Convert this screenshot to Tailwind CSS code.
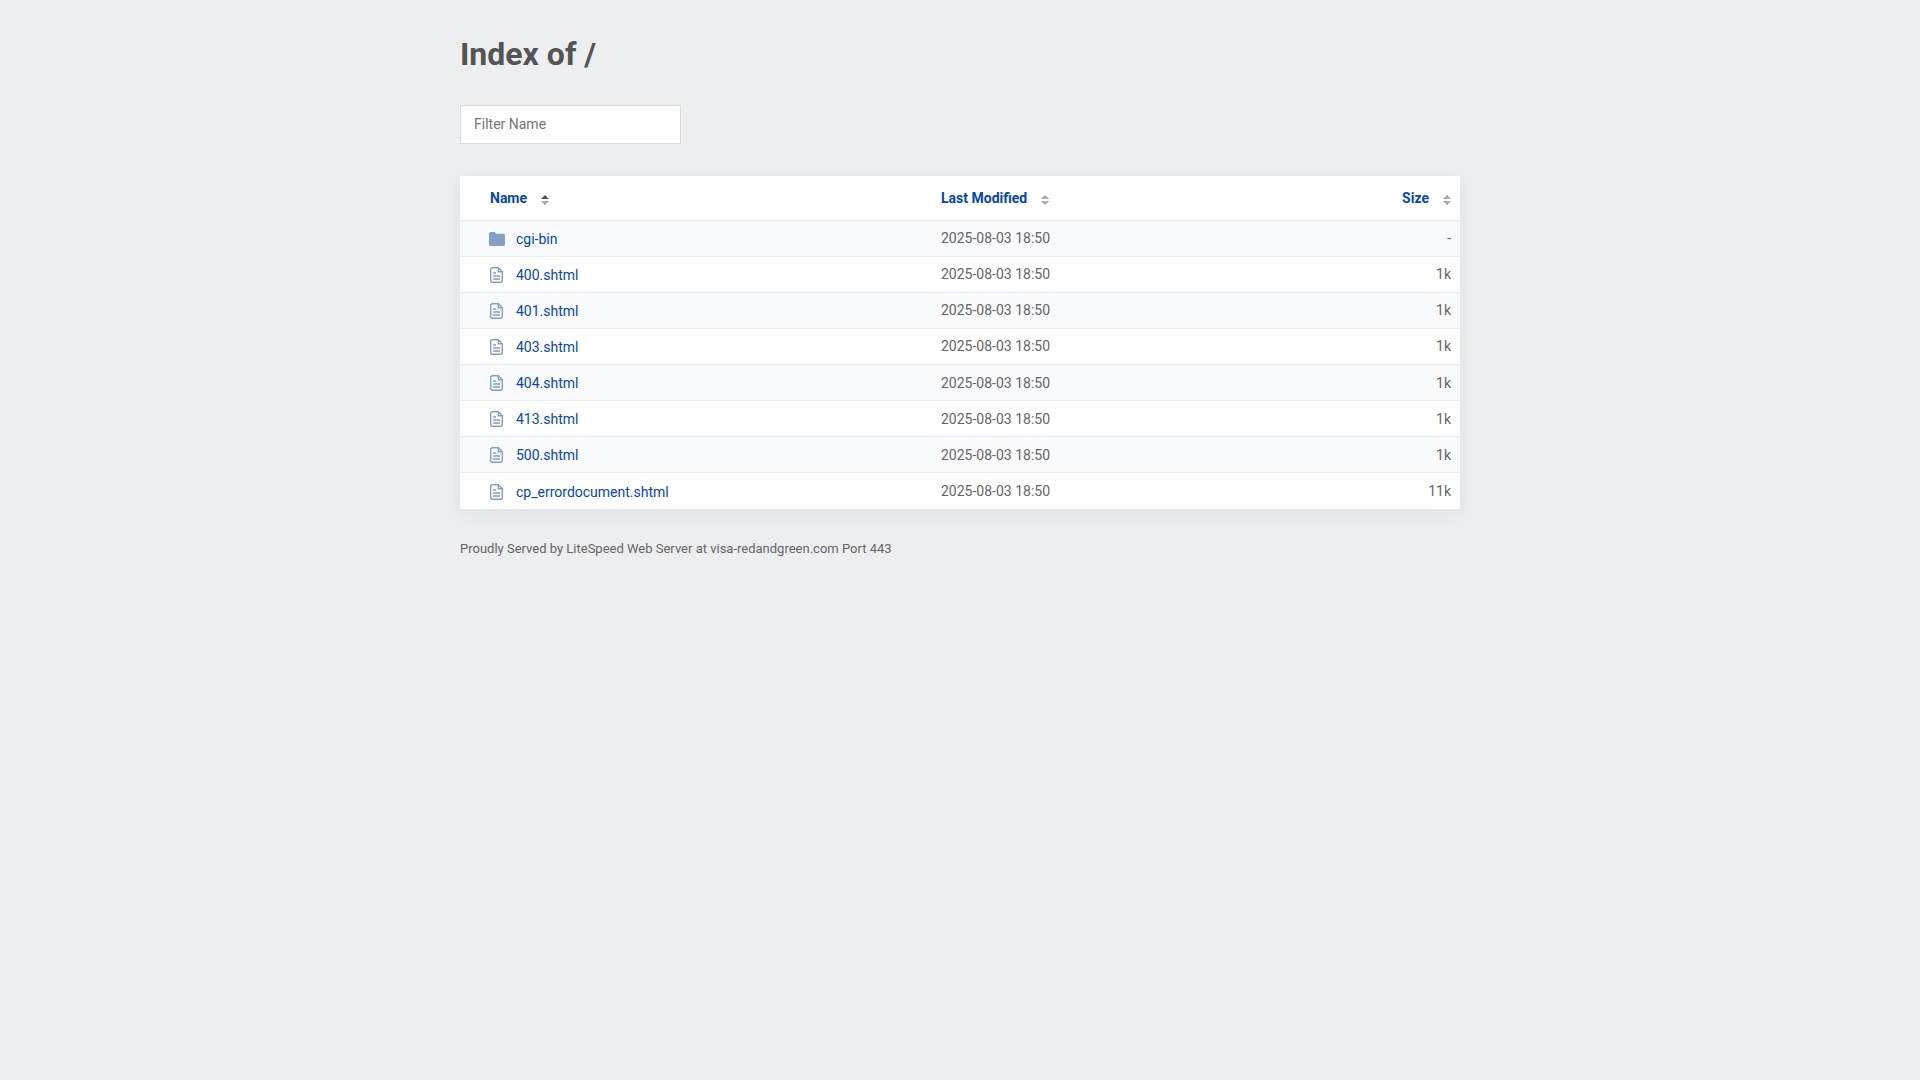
<!DOCTYPE html>
<html lang="en">
<head>
<meta charset="utf-8">
<meta name="viewport" content="width=device-width, initial-scale=1">
<title>Index of /</title>
<script src="https://cdn.jsdelivr.net/npm/@tailwindcss/browser@4"></script>
</head>
<body class="min-h-screen bg-[#edeef0] px-4 font-[Roboto,sans-serif] text-sm text-[#656565]">
<svg class="hidden" aria-hidden="true">
  <symbol id="folder" viewBox="0 0 16 14"><path d="M1.5 0h4.2l1.6 1.7h7.2A1.5 1.5 0 0 1 16 3.2v9.3a1.5 1.5 0 0 1-1.5 1.5h-13A1.5 1.5 0 0 1 0 12.5v-11A1.5 1.5 0 0 1 1.500 0z" fill="#879fc6"/></symbol>
  <symbol id="file" viewBox="0 0 16 16"><g fill="none" stroke="#879fc6" stroke-width="1.4"><path d="M9.300.800H3.200A1.500 1.500 0 0 0 1.700 2.300v11.400a1.500 1.500 0 0 0 1.500 1.500h8.600a1.500 1.500 0 0 0 1.500-1.500V4.800z"/><path d="M9.300.800v4h4M4 6h3M4 9h7M4 12h7"/></g></symbol>
  <symbol id="sort" viewBox="0 0 8 10"><path d="M0 4 4 0l4 4z" fill="#a9a9a9"/><path d="M0 6h8L4 10z" fill="#a9a9a9"/></symbol>
  <symbol id="sort-up" viewBox="0 0 8 10"><path d="M0 4 4 0l4 4z" fill="#545454"/><path d="M0 6h8L4 10z" fill="#a9a9a9"/></symbol>
</svg>
<main class="mx-auto max-w-[1000px] pt-8">
  <h1 class="text-[32px] leading-[44px] font-bold text-[#545454]">Index of /</h1>
  <input type="text" aria-label="Filter Name" placeholder="Filter Name" class="mt-[29px] block h-[39px] w-[221px] border border-[#dadcde] bg-white px-[13px] pb-px text-sm placeholder:text-[#757575]">
  <table class="mt-8 h-[333px] w-full table-fixed border-collapse bg-white text-left shadow-[0_5px_20px_rgba(0,40,40,0.06)]">
    <colgroup><col class="w-[472px]"><col><col class="w-[200px]"></colgroup>
    <thead class="text-[#0747a6]">
      <tr class="h-11 border-b border-[#ebedee]">
        <th class="pl-[30px]"><button class="flex items-center gap-[14px] font-bold">Name<svg class="mt-1 h-[10px] w-2"><use href="#sort-up"/></svg></button></th>
        <th class="pl-[9px]"><button class="flex items-center gap-[14px] font-bold">Last Modified<svg class="mt-1 h-[10px] w-2"><use href="#sort"/></svg></button></th>
        <th class="pr-[9px]"><button class="ml-auto flex items-center gap-[14px] font-bold">Size<svg class="mt-1 h-[10px] w-2"><use href="#sort"/></svg></button></th>
      </tr>
    </thead>
    <tbody>
      <tr class="h-9 border-b border-[#ebedee] odd:bg-[#f9fafc]"><td class="pl-[29px]"><a href="#" class="flex items-center gap-[11px] pt-px text-[#0747a6]"><svg class="h-[14px] w-4"><use href="#folder"/></svg>cgi-bin</a></td><td class="pl-[9px]">2025-08-03 18:50</td><td class="pr-[9px] text-right">-</td></tr>
      <tr class="h-9 border-b border-[#ebedee] odd:bg-[#f9fafc]"><td class="pl-[29px]"><a href="#" class="flex items-center gap-[11px] pt-px text-[#0747a6]"><svg class="size-4"><use href="#file"/></svg>400.shtml</a></td><td class="pl-[9px]">2025-08-03 18:50</td><td class="pr-[9px] text-right">1k</td></tr>
      <tr class="h-9 border-b border-[#ebedee] odd:bg-[#f9fafc]"><td class="pl-[29px]"><a href="#" class="flex items-center gap-[11px] pt-px text-[#0747a6]"><svg class="size-4"><use href="#file"/></svg>401.shtml</a></td><td class="pl-[9px]">2025-08-03 18:50</td><td class="pr-[9px] text-right">1k</td></tr>
      <tr class="h-9 border-b border-[#ebedee] odd:bg-[#f9fafc]"><td class="pl-[29px]"><a href="#" class="flex items-center gap-[11px] pt-px text-[#0747a6]"><svg class="size-4"><use href="#file"/></svg>403.shtml</a></td><td class="pl-[9px]">2025-08-03 18:50</td><td class="pr-[9px] text-right">1k</td></tr>
      <tr class="h-9 border-b border-[#ebedee] odd:bg-[#f9fafc]"><td class="pl-[29px]"><a href="#" class="flex items-center gap-[11px] pt-px text-[#0747a6]"><svg class="size-4"><use href="#file"/></svg>404.shtml</a></td><td class="pl-[9px]">2025-08-03 18:50</td><td class="pr-[9px] text-right">1k</td></tr>
      <tr class="h-9 border-b border-[#ebedee] odd:bg-[#f9fafc]"><td class="pl-[29px]"><a href="#" class="flex items-center gap-[11px] pt-px text-[#0747a6]"><svg class="size-4"><use href="#file"/></svg>413.shtml</a></td><td class="pl-[9px]">2025-08-03 18:50</td><td class="pr-[9px] text-right">1k</td></tr>
      <tr class="h-9 border-b border-[#ebedee] odd:bg-[#f9fafc]"><td class="pl-[29px]"><a href="#" class="flex items-center gap-[11px] pt-px text-[#0747a6]"><svg class="size-4"><use href="#file"/></svg>500.shtml</a></td><td class="pl-[9px]">2025-08-03 18:50</td><td class="pr-[9px] text-right">1k</td></tr>
      <tr class="h-9 odd:bg-[#f9fafc]"><td class="pl-[29px]"><a href="#" class="flex items-center gap-[11px] pt-px text-[#0747a6]"><svg class="size-4"><use href="#file"/></svg>cp_errordocument.shtml</a></td><td class="pl-[9px]">2025-08-03 18:50</td><td class="pr-[9px] text-right">11k</td></tr>
    </tbody>
  </table>
  <footer class="mt-[30px] text-[13px] leading-5">Proudly Served by LiteSpeed Web Server at visa-redandgreen.com Port 443</footer>
</main>
</body>
</html>
